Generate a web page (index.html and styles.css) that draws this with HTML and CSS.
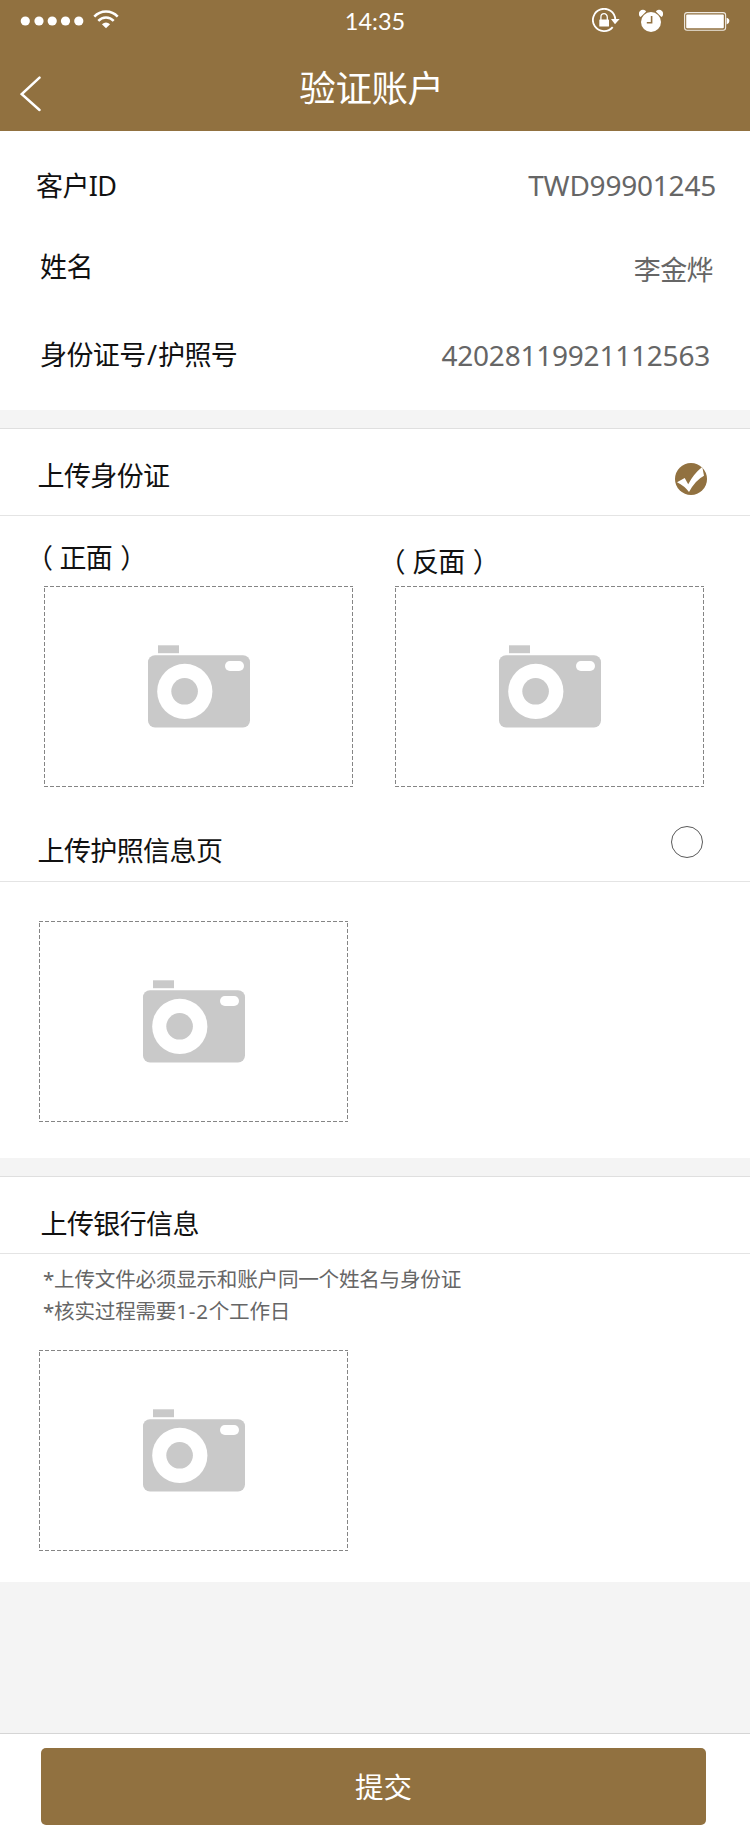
FILE: index.html
```html
<!DOCTYPE html>
<html lang="zh-CN">
<head>
<meta charset="utf-8">
<title>验证账户</title>
<link rel="stylesheet" href="styles.css">
</head>
<body>
<svg class="defs" width="0" height="0" aria-hidden="true">
  <symbol id="camera" viewBox="0 0 309 201">
    <path d="M0 .5H309M0 200.5H309" fill="none" stroke="#858585" stroke-dasharray="4 2"/>
    <path d="M.5 0V201M308.5 0V201" fill="none" stroke="#858585" stroke-dasharray="4 2" stroke-dashoffset="4"/>
    <rect x="114" y="59.3" width="21" height="7.9" fill="#c9c9c9"/>
    <rect x="104" y="69.2" width="102" height="72.4" rx="7" fill="#c9c9c9"/>
    <circle cx="140.8" cy="105.4" r="27.6" fill="#fff"/>
    <circle cx="140.6" cy="105.3" r="13.3" fill="#c9c9c9"/>
    <rect x="181" y="75.1" width="19" height="9.8" rx="4.9" fill="#fff"/>
  </symbol>
</svg>
<div class="page">
  <header class="header">
    <div class="status">
      <div class="status-left">
        <svg class="signal" width="64" height="12" viewBox="0 0 64 12" fill="#fff">
          <circle cx="5.3" cy="6" r="4.6"/><circle cx="19" cy="6" r="4.6"/><circle cx="32.2" cy="6" r="4.6"/><circle cx="45.5" cy="6" r="4.6"/><circle cx="58.8" cy="6" r="4.6"/>
        </svg>
        <svg class="wifi" width="26" height="20" viewBox="0 0 26 20">
          <g fill="none" stroke="#fff" stroke-width="2.5">
            <path d="M1.3 7.6Q6 2.5 13 2.5T24.7 7.6"/>
            <path d="M5.3 11.9Q8.5 8.5 13 8.5T20.7 11.9"/>
          </g>
          <path d="M8.9 15.2Q13 11.8 17.1 15.2L13 19.3Z" fill="#fff"/>
        </svg>
      </div>
      <div class="time">14:35</div>
      <div class="status-right">
        <svg width="28" height="26" viewBox="0 0 28 26">
          <path d="M20.7 19.2A11.2 11.2 0 1 1 23.3 11.5" fill="none" stroke="#fff" stroke-width="1.8"/>
          <path d="M19 11H27.6L23 16.2Z" fill="#fff"/>
          <rect x="7.3" y="11.4" width="9.7" height="7.2" rx=".6" fill="#fff"/>
          <path d="M8.9 12V9.2a3.2 3.5 0 0 1 6.4 0V12" fill="none" stroke="#fff" stroke-width="1.3"/>
        </svg>
        <svg width="24" height="24" viewBox="0 0 24 24">
          <path d="M1.6 8.1A4 4 0 1 1 7.2 2.6ZM22.4 8.1A4 4 0 1 0 16.8 2.6Z" fill="#fff"/>
          <circle cx="12" cy="13" r="10" fill="#fff"/>
          <path d="M12.6 7V13.7H7.8" fill="none" stroke="#917140" stroke-width="1.6"/>
        </svg>
        <svg width="46" height="20" viewBox="0 0 46 20">
          <rect x=".6" y="1.6" width="41" height="17.6" rx="2.5" fill="none" stroke="#fff" stroke-opacity=".85" stroke-width="1.1"/>
          <rect x="2.2" y="3.4" width="37.6" height="13.9" rx="1" fill="#fff"/>
          <path d="M42.6 6.8Q45.4 7.5 45.4 10.1T42.6 13.4Z" fill="#fff"/>
        </svg>
      </div>
    </div>
    <div class="nav">
      <svg class="back" width="22" height="36" viewBox="0 0 22 36"><path d="M19.5 1.7L1.8 18.1L19.5 34" fill="none" stroke="#fff" stroke-width="2.5" stroke-linecap="round"/></svg>
      <h1 class="title">验证账户</h1>
    </div>
  </header>

  <section class="info">
    <div class="row row-id"><span class="label">客户ID</span><span class="value">TWD99901245</span></div>
    <div class="row row-name"><span class="label">姓名</span><span class="value name">李金烨</span></div>
    <div class="row row-card"><span class="label">身份证号<span class="slash">/</span>护照号</span><span class="value">42028119921112563</span></div>
  </section>

  <section class="block">
    <div class="head head-card">
      <h2 class="label">上传身份证</h2>
      <svg class="check" width="32" height="32" viewBox="0 0 32 32">
        <circle cx="16" cy="16" r="16" fill="#917140"/>
        <path d="M2 19.3L9.7 15L13.2 21.3Q18.5 11 26.6 4.5Q27.5 4 27.6 5.5L29 12.7Q20.5 17 14 29Q9.5 23 2 19.3Z" fill="#fff"/>
      </svg>
    </div>
    <div class="sides">
      <div class="side side-front">
        <p class="label"><span class="open">（</span>正面<span class="close">）</span></p>
        <svg class="upload"><use href="#camera"/></svg>
      </div>
      <div class="side side-back">
        <p class="label"><span class="open">（</span>反面<span class="close">）</span></p>
        <svg class="upload"><use href="#camera"/></svg>
      </div>
    </div>
    <div class="head head-passport">
      <h2 class="label">上传护照信息页</h2>
      <span class="radio"></span>
    </div>
    <div class="passport"><svg class="upload"><use href="#camera"/></svg></div>
  </section>

  <section class="block">
    <div class="head head-bank"><h2 class="label">上传银行信息</h2></div>
    <div class="bank">
      <p class="note">*上传文件必须显示和账户同一个姓名与身份证</p>
      <p class="note">*核实过程需要<span class="days">1-2</span>个工作日</p>
      <svg class="upload"><use href="#camera"/></svg>
    </div>
  </section>

  <footer class="footer"><button class="submit" type="button">提交</button></footer>
</div>
</body>
</html>
```

FILE: styles.css
```css
* { box-sizing: border-box; margin: 0; padding: 0; }
body {
  background: #f4f4f4;
  font-family: "Noto Sans", "Noto Sans CJK SC", sans-serif;
  color: #111;
}
svg { display: block; flex: none; }
.defs { position: absolute; }
.page { width: 750px; height: 1846px; display: flex; flex-direction: column; }

.header { height: 131px; background: #917140; color: #fff; flex: none; }
.status {
  height: 40px;
  display: grid;
  grid-template-columns: 1fr auto 1fr;
  align-items: center;
  padding: 0 20px;
}
.status-left { display: flex; align-items: center; gap: 9px; }
.wifi { margin-bottom: 4px; }
.time { font: 23.5px/40px Lato, sans-serif; letter-spacing: 0; padding-top: 1px; }
.status-right { display: flex; align-items: center; justify-content: flex-end; gap: 21px; }
.status-right svg:first-child { margin-right: -2px; }
.nav {
  height: 91px;
  display: grid;
  grid-template-columns: 80px 1fr 80px;
}
.back { margin: 36px 0 0 20px; }
.title {
  font-size: 36.5px;
  font-weight: 400;
  line-height: 97px;
  text-align: center;
  letter-spacing: -0.4px;
  padding-right: 7px;
}

.label { font-size: 27px; font-weight: 400; line-height: 40px; letter-spacing: -0.6px; white-space: nowrap; }
.value { font-size: 28px; line-height: 40px; letter-spacing: -0.22px; color: #666; }
.value.name { font-size: 27px; letter-spacing: -0.6px; padding-top: 3px; }
.slash { margin: 0 1.5px; }

.info { height: 279px; background: #fff; padding-top: 35px; flex: none; }
.row { display: flex; justify-content: space-between; }
.row-id { height: 81px; padding: 0 34px 0 36px; }
.row-id .value { margin-top: -1px; }
.row-name { height: 88px; padding: 0 37px 0 40px; }
.row-card { padding: 0 40px 0 40px; }

.block { margin-top: 18px; background: #fff; border-top: 1px solid #dfdfdf; flex: none; }
.head { display: flex; justify-content: space-between; border-bottom: 1px solid #e4e4e4; }
.head-card { height: 87px; padding: 27px 43px 0 37.5px; }
.check { margin-top: 7px; }
.sides { display: flex; gap: 42px; padding-left: 44px; height: 271px; }
.side { width: 309px; display: flex; flex-direction: column; justify-content: flex-start; }
.side .label { margin-left: -18px; height: 48px; }
.side-front { padding-top: 22px; }
.side-back { padding-top: 26px; }
.side-back .label { margin-left: -16.5px; height: 44px; }
.open { margin-right: 7px; }
.close { margin-left: 8px; }
.upload { width: 309px; height: 201px; }
.head-passport { height: 95px; padding: 44px 47px 0 37.5px; }
.radio { width: 32px; height: 32px; margin-top: -5px; border: 1px solid #5a5a5a; border-radius: 50%; }
.passport { height: 276px; padding: 39px 0 0 39px; }

.head-bank { height: 77px; padding: 27px 40.5px 0; }
.bank { height: 328px; padding: 9px 0 0 39px; }
.note { padding-left: 4px; font-size: 20.6px; line-height: 32px; letter-spacing: -0.25px; color: #666; }
.days { letter-spacing: 0.8px; }
.bank .upload { margin-top: 23px; }

.footer { margin-top: auto; height: 113px; padding: 14px 44px 21px 41px; background: #fff; border-top: 1px solid #d5d5d5; }
.submit {
  display: block;
  width: 665px;
  height: 77px;
  border: 0;
  border-radius: 5px;
  background: #917140;
  color: #fff;
  font-family: inherit;
  font-size: 28.5px;
  line-height: 76px;
  padding: 1px 0 0 20px;
}
```
